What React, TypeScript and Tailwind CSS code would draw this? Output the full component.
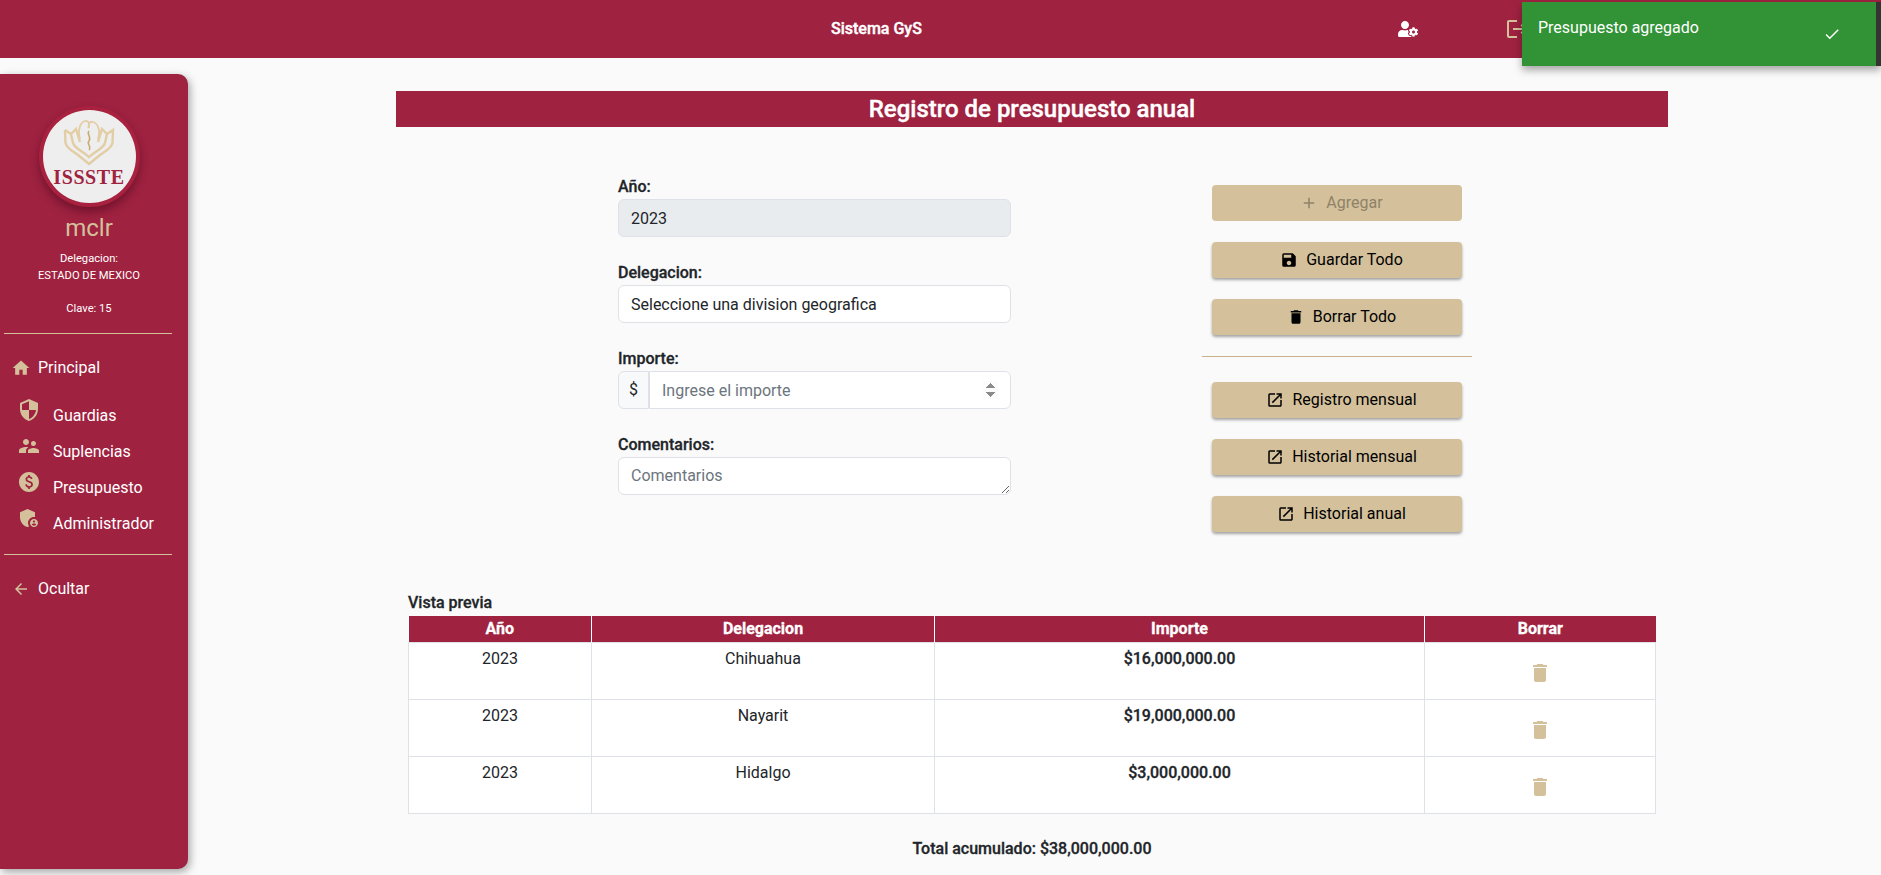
import {
  MdAdd,
  MdAdminPanelSettings,
  MdArrowBack,
  MdCheck,
  MdDelete,
  MdHome,
  MdLogout,
  MdOpenInNew,
  MdPaid,
  MdSave,
  MdSecurity,
  MdSupervisorAccount,
} from 'react-icons/md';
import { FaUserCog } from 'react-icons/fa';

const rows = [
  { anio: '2023', delegacion: 'Chihuahua', importe: '$16,000,000.00' },
  { anio: '2023', delegacion: 'Nayarit', importe: '$19,000,000.00' },
  { anio: '2023', delegacion: 'Hidalgo', importe: '$3,000,000.00' },
];

const subMenu = [
  { label: 'Guardias', icon: <MdSecurity size={24} /> },
  { label: 'Suplencias', icon: <MdSupervisorAccount size={24} /> },
  { label: 'Presupuesto', icon: <MdPaid size={24} /> },
  { label: 'Administrador', icon: <MdAdminPanelSettings size={24} /> },
];

function Logo() {
  return (
    <div className="flex h-[93px] w-[93px] flex-col items-center rounded-full bg-[#eeeeee] shadow-[0_0_0_4px_#a8213f,0_5px_10px_4px_rgba(60,0,20,0.45)]">
      <svg viewBox="0 0 52 48" className="mt-[9px] h-[48px] w-[52px]" fill="none" stroke="#e2cda4" strokeWidth="2.4">
        <path d="M2 11 L2.5 24 C4 30 10 32 15 36 L26 45 L37 36 C42 32 48 30 49.5 24 L50 11 L44 15 L42 24" />
        <path d="M2 11 L8 15 L10 24 C12 30 20 32 26 38 C32 32 40 30 42 24" />
        <path d="M8 15 L13 10 L17 23" />
        <path d="M44 15 L39 10 L35 23" />
        <path d="M17 20 C14 10 18 3 22 2 C26 1 27 6 25 9" strokeWidth="1.8" />
        <path d="M35 20 C38 10 34 4 30 3 C27 2 25 5 26 9" strokeWidth="1.8" />
        <path d="M26 12 C23 15 29 18 26 22 C23 25 29 27 26 31" stroke="#c9a96e" strokeWidth="1.5" />
      </svg>
      <span className="mt-[-1px] text-[20px] leading-[22px] font-bold tracking-[0.6px] text-[#9f2241] [font-family:'Liberation_Serif',serif]">
        ISSSTE
      </span>
    </div>
  );
}

function Sidebar() {
  return (
    <aside className="mt-4 h-[795px] w-[188px] shrink-0 rounded-r-[10px] bg-[#9f2241] shadow-[2px_3px_8px_rgba(0,0,0,0.35)]">
      <div className="pr-[10px]">
        <div className="flex flex-col items-center pt-[36px]">
          <Logo />
        </div>
        <div className="mt-[9px] text-center text-[24px] leading-[32px] text-[#d4c19c]">mclr</div>
        <div className="mt-[6px] text-center text-[11.2px] leading-[17px] text-white">
          <div>Delegacion:</div>
          <div>ESTADO DE MEXICO</div>
          <div className="mt-[16px]">Clave: 15</div>
        </div>
      </div>
      <hr className="mx-1 mt-[16px] w-[168px] border-t border-[#d4c19c]" />
      <div className="mt-[22px] flex h-6 items-center pl-[11px] text-[16px] text-white">
        <MdHome size={20} className="mr-[7px] text-[#d4c19c]" />
        Principal
      </div>
      <div className="mt-[18px] flex flex-col">
        {subMenu.map((item) => (
          <div key={item.label} className="flex h-9 items-start pl-[17px] text-[16px] text-white">
            <span className="w-[36px] text-[#d4c19c]">{item.icon}</span>
            <span className="mt-[6px] leading-6">{item.label}</span>
          </div>
        ))}
      </div>
      <hr className="mx-1 mt-[12px] w-[168px] border-t border-[#d4c19c]" />
      <div className="mt-[22px] flex h-6 items-center pl-[12px] text-[16px] text-white">
        <MdArrowBack size={18} className="mr-[8px] text-[#d4c19c]" />
        Ocultar
      </div>
    </aside>
  );
}

function Field({ label, children }: { label: string; children: React.ReactNode }) {
  return (
    <div className="mb-[24px]">
      <label className="block h-6 text-[16px] leading-6 font-medium text-[#212529] [-webkit-text-stroke:0.3px]">{label}</label>
      {children}
    </div>
  );
}

const inputCls =
  'block h-[38px] w-full rounded-[6px] border border-[#dee2e6] px-3 text-[16px] text-[#212529] outline-none placeholder:text-[#6c757d]';

function ActionButton({ icon, children, disabled }: { icon: React.ReactNode; children: React.ReactNode; disabled?: boolean }) {
  return (
    <button
      className={
        disabled
          ? 'flex h-9 w-[250px] items-center justify-center gap-2 rounded-[4px] bg-[#d4c19c] pl-[9px] text-[16px] text-[#8f8268]'
          : 'flex h-9 w-[250px] items-center justify-center gap-2 rounded-[4px] bg-[#d4c19c] pl-[9px] text-[16px] text-black shadow-[0_2px_3px_rgba(0,0,0,0.35)]'
      }
    >
      {icon}
      {children}
    </button>
  );
}

export default function App() {
  return (
    <div className="relative min-h-[875px] overflow-hidden bg-[#fafafa] text-[#212529] [font-family:Roboto,sans-serif]">
      <header className="flex h-[58px] items-center bg-[#9f2241]">
        <div className="w-[878px] pl-[831px] text-[16px] font-medium whitespace-nowrap text-white [-webkit-text-stroke:0.4px]">Sistema GyS</div>
        <FaUserCog size={20} className="ml-[520px] text-white" />
        <MdLogout size={24} className="ml-[87px] text-[#d4c19c]" />
      </header>

      <div className="absolute top-[2px] right-0 flex h-[64px] w-[359px] justify-between border-r-[5px] border-[#333333] bg-[#329236] pt-[15px] pr-[35px] pl-[16px] text-[16px] text-white shadow-[0_4px_8px_rgba(0,0,0,0.35)]">
        <span className="leading-[22px]">Presupuesto agregado</span>
        <MdCheck size={18} className="mt-[8px]" />
      </div>

      <div className="flex">
        <Sidebar />
        <main className="ml-[208px] w-[1272px] pt-[33px]">
          <h1 className="h-9 bg-[#9f2241] text-center text-[24px] leading-9 font-medium text-white [-webkit-text-stroke:0.4px]">
            Registro de presupuesto anual
          </h1>

          <div className="mt-[47px] flex">
            <form className="ml-[222px] w-[393px] pt-[1px]">
              <Field label="Año:">
                <input className={`${inputCls} bg-[#e9ecef]`} value="2023" disabled readOnly />
              </Field>
              <Field label="Delegacion:">
                <input className={`${inputCls} bg-white`} value="Seleccione una division geografica" readOnly />
              </Field>
              <Field label="Importe:">
                <div className="flex">
                  <span className="flex h-[38px] w-[31px] items-center justify-center rounded-l-[6px] border border-[#dee2e6] bg-[#f8f9fa] text-[16px]">
                    $
                  </span>
                  <input
                    type="number"
                    placeholder="Ingrese el importe"
                    className="block h-[38px] w-[362px] rounded-r-[6px] border border-[#dee2e6] bg-white px-3 py-[6px] text-[16px] outline-none placeholder:text-[#6c757d] [&::-webkit-inner-spin-button]:opacity-100"
                  />
                </div>
              </Field>
              <Field label="Comentarios:">
                <textarea
                  placeholder="Comentarios"
                  className="block h-[38px] w-full rounded-[6px] border border-[#dee2e6] bg-white px-3 py-[6px] text-[16px] outline-none placeholder:text-[#6c757d]"
                />
              </Field>
            </form>

            <div className="ml-[191px] flex w-[270px] flex-col items-center gap-[21px] pt-[11px]">
              <ActionButton disabled icon={<MdAdd size={18} />}>Agregar</ActionButton>
              <ActionButton icon={<MdSave size={18} />}>Guardar Todo</ActionButton>
              <ActionButton icon={<MdDelete size={18} />}>Borrar Todo</ActionButton>
              <hr className="mb-[4px] w-full border-t border-[#c8b08a]" />
              <ActionButton icon={<MdOpenInNew size={18} />}>Registro mensual</ActionButton>
              <ActionButton icon={<MdOpenInNew size={18} />}>Historial mensual</ActionButton>
              <ActionButton icon={<MdOpenInNew size={18} />}>Historial anual</ActionButton>
            </div>
          </div>

          <div className="mx-3 mt-[59px]">
            <div className="mb-[1px] h-6 text-[16px] leading-6 font-medium [-webkit-text-stroke:0.3px]">Vista previa</div>
            <table className="w-[1248px] table-fixed border-collapse bg-white text-center text-[16px]">
              <thead>
                <tr className="h-[26px] bg-[#9f2241] text-white [-webkit-text-stroke:0.3px]">
                  <th className="w-[183px] border-r border-white font-bold">Año</th>
                  <th className="w-[343px] border-r border-white font-bold">Delegacion</th>
                  <th className="w-[490px] border-r border-white font-bold">Importe</th>
                  <th className="font-bold">Borrar</th>
                </tr>
              </thead>
              <tbody>
                {rows.map((row) => (
                  <tr key={row.delegacion} className="h-[57px] align-top">
                    <td className="border border-[#dee2e6] pt-1">{row.anio}</td>
                    <td className="border border-[#dee2e6] pt-1">{row.delegacion}</td>
                    <td className="border border-[#dee2e6] pt-1 font-medium [-webkit-text-stroke:0.3px]">{row.importe}</td>
                    <td className="border border-[#dee2e6] pt-[18px]">
                      <MdDelete size={24} className="mx-auto text-[#d4c19c]" />
                    </td>
                  </tr>
                ))}
              </tbody>
            </table>
            <div className="mt-[23px] text-center text-[16px] leading-6 font-medium [-webkit-text-stroke:0.3px]">Total acumulado: $38,000,000.00</div>
          </div>
        </main>
      </div>
    </div>
  );
}
